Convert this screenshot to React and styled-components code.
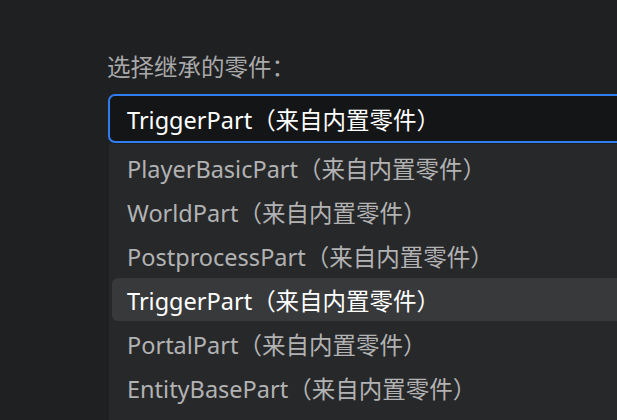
import React, { useState } from 'react';
import styled, { createGlobalStyle } from 'styled-components';

const GlobalStyle = createGlobalStyle`
    html, body { margin: 0; padding: 0; background: #1f2022; overflow: hidden; }
    body { font-family: "Noto Sans", "Noto Sans CJK SC", sans-serif; }
`;

const Page = styled.div`
    width: 617px; height: 420px; overflow: hidden;
    padding: 52px 0 0 107px; box-sizing: border-box;
`;
const Label = styled.div`
    color: #a9a9aa; font-size: 23.5px; line-height: 31px; margin-bottom: 11px; white-space: nowrap;
`;
const Field = styled.div`
    width: 620px; margin-left: 1px; display: flex; flex-direction: column;
`;
const Input = styled.div`
    height: 49px; box-sizing: border-box; display: flex; align-items: center;
    padding-left: 17px; background: #141517; border: 2px solid #2f7df0;
    border-radius: 7px; color: #ffffff; font-size: 23.5px; white-space: nowrap;
`;
const Menu = styled.div`
    margin: 1px 0 0 1px; background: #27282a; padding: 2px 0 20px 3px;
    display: flex; flex-direction: column; gap: 1px;
`;
const Option = styled.div`
    height: 43px; display: flex; align-items: center; padding-left: 15px;
    border-radius: 6px; font-size: 23.5px; white-space: nowrap;
    color: ${p => (p.$active ? '#ffffff' : '#b2b2b3')};
    background: ${p => (p.$active ? '#38393b' : 'transparent')};
`;

const parts = ['PlayerBasicPart', 'WorldPart', 'PostprocessPart', 'TriggerPart', 'PortalPart', 'EntityBasePart'];

export default function App() {
    const [selected, setSelected] = useState('TriggerPart');
    return (
        <>
            <GlobalStyle />
            <Page>
                <Label>选择继承的零件：</Label>
                <Field>
                    <Input>{selected}（来自内置零件）</Input>
                    <Menu>
                        {parts.map(p => (
                            <Option key={p} $active={p === selected} onClick={() => setSelected(p)}>
                                {p}（来自内置零件）
                            </Option>
                        ))}
                    </Menu>
                </Field>
            </Page>
        </>
    );
}
